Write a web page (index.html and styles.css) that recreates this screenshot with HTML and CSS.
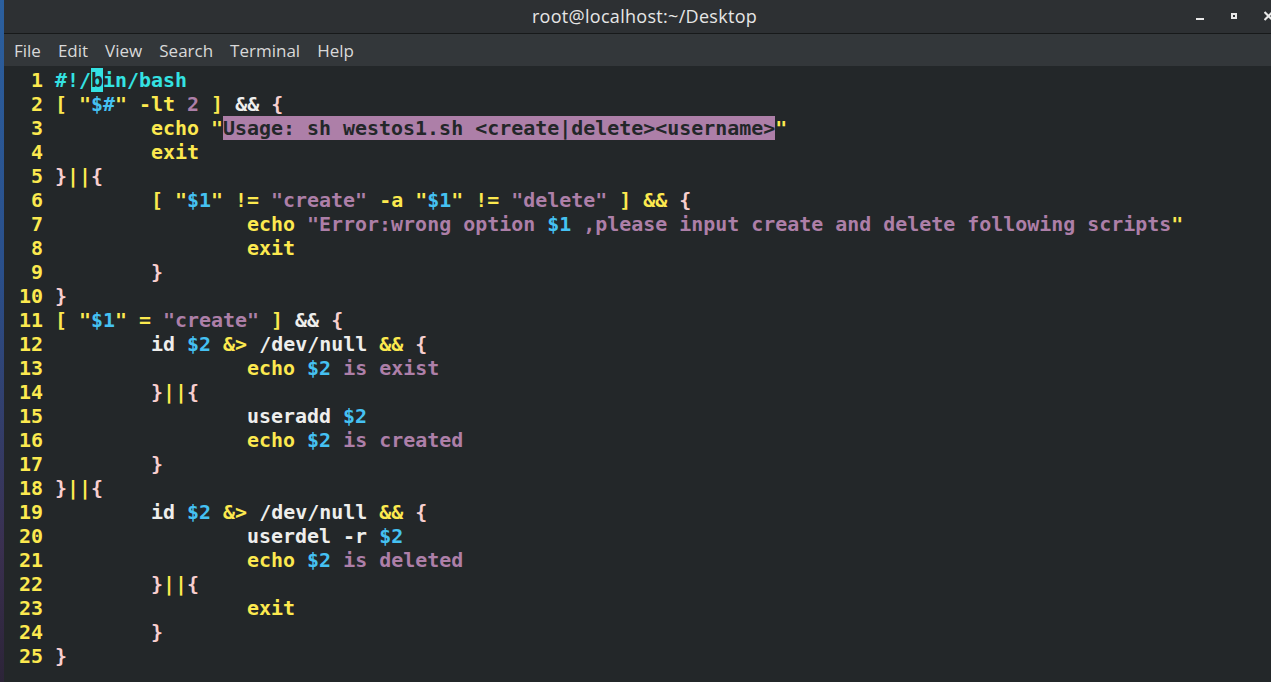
FILE: index.html
```html
<!DOCTYPE html>
<html lang="en">
<head>
    <meta charset="UTF-8">
    <title>root@localhost:~/Desktop</title>
    <link rel="stylesheet" href="styles.css">
</head>
<body>
    <div class="desktop-edge"></div>
    <div class="window">
        <header class="titlebar">
            <span class="title">root@localhost:~/Desktop</span>
            <div class="win-buttons">
                <span class="btn-min"></span>
                <span class="btn-max"></span>
                <svg class="btn-close" width="7" height="10" viewBox="0 0 7 10"><path d="M0.5 1 L8.5 9 M8.5 1 L0.5 9" stroke="#e8e8e8" stroke-width="2.2"/></svg>
            </div>
        </header>
        <nav class="menubar">
            <span>File</span>
            <span>Edit</span>
            <span>View</span>
            <span>Search</span>
            <span>Terminal</span>
            <span>Help</span>
        </nav>
        <main class="terminal">
<pre class="gutter">  1
  2
  3
  4
  5
  6
  7
  8
  9
 10
 11
 12
 13
 14
 15
 16
 17
 18
 19
 20
 21
 22
 23
 24
 25</pre>
<pre class="code"><span class="c">#!/<span class="cursor">b</span>in/bash</span>
<span class="y">[ "</span><span class="b">$#</span><span class="y">" -lt </span><span class="p">2</span> <span class="y">]</span> <span class="w">&amp;&amp;</span> <span class="k">{</span>
	<span class="y">echo "</span><span class="hl">Usage: sh westos1.sh &lt;create|delete&gt;&lt;username&gt;</span><span class="y">"</span>
	<span class="y">exit</span>
<span class="k">}</span><span class="y">||</span><span class="k">{</span>
	<span class="y">[ "</span><span class="b">$1</span><span class="y">" != </span><span class="p">"create"</span><span class="y"> -a "</span><span class="b">$1</span><span class="y">" != </span><span class="p">"delete"</span><span class="y"> ] &amp;&amp;</span> <span class="k">{</span>
		<span class="y">echo</span> <span class="p">"Error:wrong option </span><span class="b">$1</span><span class="p"> ,please input create and delete following scripts</span><span class="y">"</span>
		<span class="y">exit</span>
	<span class="k">}</span>
<span class="k">}</span>
<span class="y">[ "</span><span class="b">$1</span><span class="y">" = </span><span class="p">"create"</span><span class="y"> ]</span> <span class="w">&amp;&amp;</span> <span class="k">{</span>
	<span class="w">id</span> <span class="b">$2</span> <span class="y">&amp;&gt;</span> <span class="w">/dev/null</span> <span class="y">&amp;&amp;</span> <span class="k">{</span>
		<span class="y">echo</span> <span class="b">$2</span> <span class="p">is exist</span>
	<span class="k">}</span><span class="y">||</span><span class="k">{</span>
		<span class="w">useradd</span> <span class="b">$2</span>
		<span class="y">echo</span> <span class="b">$2</span> <span class="p">is created</span>
	<span class="k">}</span>
<span class="k">}</span><span class="y">||</span><span class="k">{</span>
	<span class="w">id</span> <span class="b">$2</span> <span class="y">&amp;&gt;</span> <span class="w">/dev/null</span> <span class="y">&amp;&amp;</span> <span class="k">{</span>
		<span class="w">userdel -r</span> <span class="b">$2</span>
		<span class="y">echo</span> <span class="b">$2</span> <span class="p">is deleted</span>
	<span class="k">}</span><span class="y">||</span><span class="k">{</span>
		<span class="y">exit</span>
	<span class="k">}</span>
<span class="k">}</span></pre>
        </main>
    </div>
</body>
</html>
```

FILE: styles.css
```css
html, body {
    margin: 0;
    padding: 0;
    height: 100%;
    overflow: hidden;
}

body {
    display: flex;
    background: #232729;
    font-family: "Open Sans", "Noto Sans", sans-serif;
}

/* デスクトップの端 */
.desktop-edge {
    width: 4px;
    flex-shrink: 0;
    background: linear-gradient(#2b5f9e 0%, #2a4f8a 40%, #3a3050 80%, #2c2438 100%);
}

.window {
    flex: 1;
    display: flex;
    flex-direction: column;
    min-width: 0;
}

/* タイトルバー */
.titlebar {
    height: 33px;
    background: #2d3033;
    border-bottom: 1px solid #17191a;
    display: flex;
    align-items: center;
    justify-content: center;
    position: relative;
}

.title {
    color: #e6e6e6;
    font-size: 18px;
    letter-spacing: 0.3px;
    margin-left: 14px;
    margin-top: -1px;
}

.win-buttons {
    position: absolute;
    right: 0;
    top: 0;
    height: 33px;
    display: flex;
    align-items: center;
}

.btn-min {
    width: 8px;
    height: 2px;
    background: #e8e8e8;
    margin-top: 4px;
    margin-right: 27px;
}

.btn-max {
    width: 6px;
    height: 6px;
    border: 2px solid #e8e8e8;
    box-sizing: border-box;
    background: #2d3033;
    margin-top: -1px;
    margin-right: 27px;
}

.btn-close {
    flex-shrink: 0;
    display: block;
    margin-top: -1px;
}

/* メニュー */
.menubar {
    height: 32px;
    background: #33373a;
    display: flex;
    align-items: center;
    gap: 17px;
    padding-left: 10px;
    color: #d9d9d9;
    font-size: 17px;
}

/* 端末 */
.terminal {
    flex: 1;
    display: flex;
    background: #232729;
    padding-top: 2px;
}

.gutter, .code {
    margin: 0;
    font-family: "DejaVu Sans Mono", monospace;
    font-weight: bold;
    font-size: 19.95px;
    line-height: 24px;
}

.gutter {
    color: #fce94f;
    width: 4ch;
    margin-left: 3px;
}

.code {
    tab-size: 8;
    color: #eeeeec;
}

.c { color: #34e2e2; }
.y { color: #fce94f; }
.b { color: #45c1f2; }
.p { color: #ad7fa8; }
.w { color: #eeeeec; }
.k { color: #f8cfcf; }

.cursor {
    background: #34e2e2;
    color: #232729;
}

.hl {
    background: #ad7fa8;
    color: #232729;
}
```
